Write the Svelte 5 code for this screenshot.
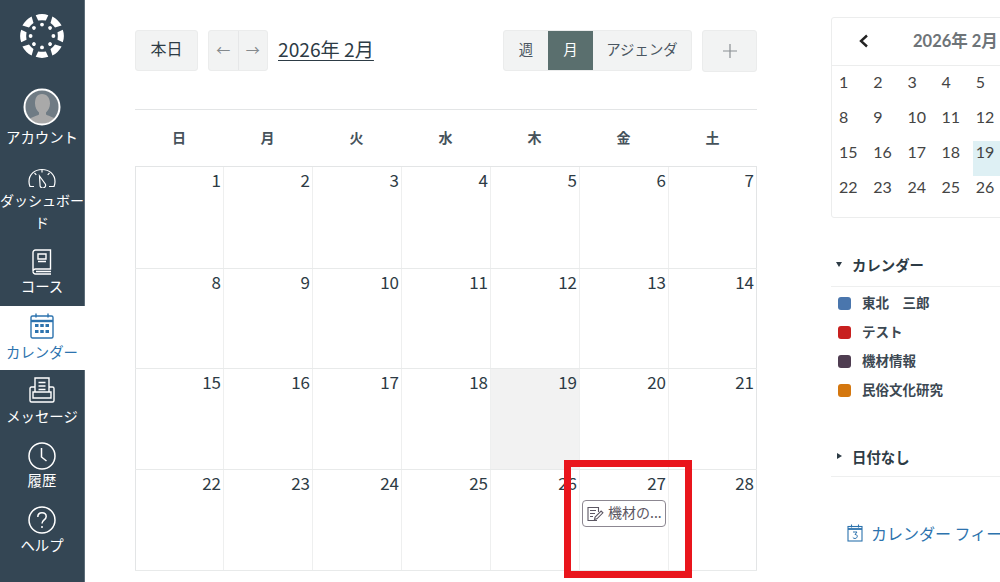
<script>
  const weekdays = ['日', '月', '火', '水', '木', '金', '土'];
  const weeks = [[1,2,3,4,5,6,7],[8,9,10,11,12,13,14],[15,16,17,18,19,20,21],[22,23,24,25,26,27,28]];
  const rowHeights = [102, 100, 101, 101];
  const mini = [[1,2,3,4,5],[8,9,10,11,12],[15,16,17,18,19],[22,23,24,25,26]];
  const cals = [
    { name: '東北　三郎', color: '#4a76ad' },
    { name: 'テスト', color: '#c8201f' },
    { name: '機材情報', color: '#4f3d51' },
    { name: '民俗文化研究', color: '#d4770f' }
  ];
  const wedgeAngles = [0, 45, 90, 135, 180, 225, 270, 315];
</script>

<div class="page">
  <nav class="rail">
    <div class="logo">
      <svg width="46" height="46" viewBox="-23 -23 46 46" fill="#fff">
        {#each wedgeAngles as a}
          {#if a % 90 === 0}
            <path transform="rotate({a})" d="M-6.300 -20.800 Q0 -23 6.300 -20.800 L3.800 -15.500 Q0 -16.200 -3.800 -15.500 Z" />
            <circle transform="rotate({a})" cx="0" cy="-11.400" r="1.900" />
          {:else}
            <path transform="rotate({a})" d="M-6.500 -21.200 Q0 -23.200 6.500 -21.200 L3.200 -15.200 Q0 -15.800 -3.200 -15.200 Z" />
            <circle transform="rotate({a})" cx="0" cy="-11.400" r="1.900" />
          {/if}
        {/each}
      </svg>
    </div>

    <a class="item account">
      <svg class="avatar" width="38" height="38" viewBox="0 0 38 38">
        <defs><clipPath id="c"><circle cx="19" cy="19" r="17" /></clipPath></defs>
        <g clip-path="url(#c)">
          <circle cx="19" cy="19" r="17" fill="#6f7b84" />
          <path d="M19 6c5 0 8 4 8 9.500 0 4-1.800 7-4 9v2c3 2 10 2.500 12 8v6H4v-6c2-5.500 9-6 12-8v-2c-2.200-2-4-5-4-9C12 10 14 6 19 6z" fill="#a9a9a9" />
        </g>
        <circle cx="19" cy="19" r="17.500" fill="none" stroke="#fff" stroke-width="2" />
      </svg>
      <span>アカウント</span>
    </a>

    <a class="item dash">
      <svg width="28" height="20" viewBox="0 0 28 20" fill="none" stroke="#fff" stroke-width="1.200">
        <path d="M6 18.500H2C1.300 16.800 1 15 1 13.500 1 6.500 6.500 1.500 14 1.500S27 6.500 27 13.500c0 1.500-.3 3.300-1 5H21" />
        <path d="M11.500 8l5.800 8a2.800 2.800 0 1 1-5.200 2z" />
        <path d="M14 2v2.500M6.500 5l1.800 1.800M21.500 5l-1.800 1.800" />
      </svg>
      <span>ダッシュボード</span>
    </a>

    <a class="item">
      <svg width="20" height="26" viewBox="0 0 20 26" fill="none" stroke="#fff" stroke-width="1.400">
        <path d="M3.500 1h15v19h-15A2.500 2.500 0 0 0 1 22.500V3.500A2.500 2.500 0 0 1 3.500 1z" />
        <path d="M6 5h8v5H6zM6 12.500h8" />
        <path d="M1 22.500A2.500 2.500 0 0 0 3.500 25H19M4 22.500h15" />
      </svg>
      <span>コース</span>
    </a>

    <a class="item active">
      <svg width="24" height="26" viewBox="0 0 24 26" fill="none" stroke="#2d73ae" stroke-width="1.400">
        <rect x="1" y="3" width="22" height="22" rx="1.500" />
        <path d="M1 8h22" stroke-width="2.400" />
        <path d="M6 .5v4M18 .5v4" />
        <g fill="#2d73ae" stroke="none">
          <rect x="5" y="11" width="3.500" height="3" /><rect x="10.250" y="11" width="3.500" height="3" /><rect x="15.500" y="11" width="3.500" height="3" />
          <rect x="5" y="17" width="3.500" height="3" /><rect x="10.250" y="17" width="3.500" height="3" /><rect x="15.500" y="17" width="3.500" height="3" />
        </g>
      </svg>
      <span>カレンダー</span>
    </a>

    <a class="item msg">
      <svg width="26" height="26" viewBox="0 0 26 26" fill="none" stroke="#fff" stroke-width="1.400">
        <path d="M6 15V1h14v14" />
        <path d="M9.500 5.500h7M9.500 9h7M9.500 12.500h7" stroke-width="1.600" />
        <path d="M6 10H2.500C1.500 10 1 10.700 1 11.500V23.500C1 24.500 1.500 25 2.500 25h21c1 0 1.500-.5 1.500-1.500V11.500c0-.8-.5-1.500-1.500-1.500H20" />
        <path d="M4 15h18v6H4z" />
      </svg>
      <span>メッセージ</span>
    </a>

    <a class="item round">
      <svg width="28" height="28" viewBox="0 0 28 28" fill="none" stroke="#fff" stroke-width="1.500">
        <circle cx="14" cy="14" r="13" />
        <path d="M13.500 6v9l5 4" />
      </svg>
      <span>履歴</span>
    </a>

    <a class="item round help">
      <svg width="28" height="28" viewBox="0 0 28 28" fill="none" stroke="#fff" stroke-width="1.500">
        <circle cx="14" cy="14" r="13" />
        <path d="M9.800 11c0-2.600 1.800-4.300 4.200-4.300s4.200 1.600 4.200 3.800c0 3.400-4.200 3.500-4.200 7" />
        <circle cx="14" cy="21" r="1" fill="#fff" stroke="none" />
      </svg>
      <span>ヘルプ</span>
    </a>
  </nav>

  <main class="main">
    <header class="toolbar">
      <button class="btn today">本日</button>
      <div class="btn arrows">
        <span class="arrow">←</span>
        <span class="arrow">→</span>
      </div>
      <a class="title">2026年 2月</a>
      <div class="btn views">
        <span class="view week">週</span>
        <span class="view on">月</span>
        <span class="view agenda">アジェンダ</span>
      </div>
      <button class="btn add" aria-label="追加">
        <svg width="14" height="14" viewBox="0 0 14 14"><path d="M7 0v14M0 7h14" stroke="#8a8f93" stroke-width="1.200" /></svg>
      </button>
    </header>

    <div class="weekdays">
      {#each weekdays as d}<div class="wd">{d}</div>{/each}
    </div>

    <div class="grid">
      {#each weeks as w, r}
        <div class="week-row" style="height:{rowHeights[r]}px">
          {#each w as n}
            <div class="day" class:today-cell={n === 19}>
              <span class="num">{n}</span>
              {#if n === 27}
                <div class="event">
                  <svg width="18" height="18" viewBox="0 0 18 18" fill="none" stroke="#5c5763" stroke-width="1.100">
                    <path d="M11 15.500H2V2.500h10.500V7" />
                    <path d="M4 5.500h6M4 8.500h5M4 11.500h3" />
                    <path d="M8.500 14.500l.6-2.500 6-6 1.800 1.800-6 6z" />
                  </svg>
                  <span>機材の...</span>
                </div>
              {/if}
            </div>
          {/each}
        </div>
      {/each}
    </div>
  </main>

  <aside class="side">
    <section class="mini">
      <div class="mini-head">
        <svg width="12" height="14" viewBox="0 0 12 14" fill="none" stroke="#222" stroke-width="2.400"><path d="M9 1.500L3 7l6 5.500" /></svg>
        <span>2026年 2月</span>
      </div>
      <div class="mini-body">
        {#each mini as row}
          <div class="mini-row">
            {#each row as n}
              <span class="mini-cell" class:mini-today={n === 19}>{n}</span>
            {/each}
          </div>
        {/each}
      </div>
    </section>

    <section class="acc first">
      <h3 class="acc-head"><i class="tri down"></i>カレンダー</h3>
      <ul class="cal-list">
        {#each cals as c}
          <li><i class="swatch" style="background:{c.color}"></i><span>{c.name}</span></li>
        {/each}
      </ul>
    </section>

    <section class="acc second">
      <h3 class="acc-head"><i class="tri right"></i>日付なし</h3>
    </section>

    <a class="feed">
      <svg width="16" height="18" viewBox="0 0 16 18" fill="none" stroke="#2d73ae" stroke-width="1.100">
        <rect x="1" y="2.500" width="14" height="14.500" />
        <path d="M1 5h14" stroke-width="1.800" />
        <path d="M4.500 .5v3M11.500 .5v3" />
        <path d="M6 8h4l-2 2.500c1.500 0 2.300.8 2.300 1.800S9.300 14.500 8 14.500c-1 0-1.800-.4-2.200-1.100" stroke-width="1" />
      </svg>
      <span>カレンダー フィード</span>
    </a>
  </aside>

  <div class="highlight"></div>
</div>

<style>
  :global(body) { margin: 0; }
  .page {
    position: relative;
    display: flex;
    width: 1000px;
    height: 582px;
    overflow: hidden;
    background: #fff;
    color: #2d3b45;
    font-family: "Noto Sans CJK JP", Lato, sans-serif;
  }

  .rail {
    flex: 0 0 85px;
    width: 85px;
    min-width: 0;
    height: 582px;
    background: #344654;
    box-shadow: inset -1px 0 #5d6d79;
    color: #fff;
    display: flex;
    flex-direction: column;
  }
  .logo { height: 85px; display: flex; justify-content: center; align-items: flex-start; padding: 13px 1px 0 0; box-sizing: border-box; }
  .item {
    height: 64px;
    width: 85px;
    display: flex;
    flex-direction: column;
    align-items: center;
    justify-content: flex-start;
    padding: 7px 1px 0 0;
    box-sizing: border-box;
    text-align: center;
    font-size: 14.400px;
    line-height: 22px;
  }
  .item svg { display: block; flex: none; }
  .item span { display: block; width: 84px; margin-top: 0; }
  .account { height: 73px; padding-top: 3px; }
  .account span { margin-top: -3px; line-height: 28px; }
  .dash { height: 84px; padding-top: 10px; font-size: 14px; }
  .dash span { margin-top: 1px; }
  .active { background: #fff; color: #2d73ae; }
  .active span, .msg span { margin-top: 2px; }
  .round { padding-top: 8px; }
  .round span { margin-top: -1px; }
  .help span { margin-top: 0; }

  .main { margin-left: 50px; width: 622px; flex: 0 0 622px; }
  .toolbar { display: flex; align-items: flex-start; height: 110px; box-sizing: border-box; padding-top: 30px; border-bottom: 1px solid #e3e5e6; }
  .btn {
    box-sizing: border-box;
    background: #f2f3f3;
    border: 1px solid #ebecec;
    border-radius: 3px;
    color: #2d3b45;
    font: inherit;
    font-size: 14.400px;
    padding: 0;
  }
  .today { width: 63px; height: 41px; font-size: 16px; padding-bottom: 5px; }
  .arrows { width: 60px; height: 41px; margin-left: 10px; display: flex; }
  .arrow { flex: 1; display: flex; align-items: center; justify-content: center; color: #84898c; font-size: 14px; padding-bottom: 3px; }
  .arrow + .arrow { border-left: 1px solid #e6e7e8; }
  .title { margin-left: 10px; margin-top: 5px; font-size: 19.200px; line-height: 28px; text-decoration: underline; text-underline-offset: 3px; }
  .views { margin-left: auto; width: 189px; height: 41px; display: flex; overflow: hidden; align-items: stretch; }
  .view { display: flex; align-items: center; justify-content: center; color: #4a5661; padding-bottom: 5px; box-sizing: border-box; }
  .week { width: 44px; }
  .on { width: 45px; background: #5a6f6e; color: #fff; }
  .agenda { flex: 1; }
  .add { margin-left: 10px; width: 55px; height: 42px; display: flex; align-items: center; justify-content: center; }

  .weekdays { display: grid; grid-template-columns: 88px repeat(6, 89px); height: 56px; box-sizing: border-box; padding-bottom: 3px; align-items: center; text-align: center; font-size: 14px; font-weight: 700; color: #46525b; }

  .grid { border-top: 1px solid #e3e5e6; }
  .week-row { display: grid; grid-template-columns: 88px repeat(6, 89px); box-sizing: border-box; border-bottom: 1px solid #e8eaea; }
  .day { border-left: 1px solid #eeefef; text-align: right; padding: 1px 2px 0 0; box-sizing: border-box; position: relative; font-size: 17px; line-height: 24px; min-width: 0; }
  .day:first-child { border-left-color: #e3e5e6; }
  .day:last-child { border-right: 1px solid #e3e5e6; }
  .today-cell { background: #f2f2f2; }
  .num { display: block; }
  .event {
    box-sizing: border-box;
    width: 84px;
    height: 27px;
    margin: 5px 0 0 2px;
    border: 1px solid #8c8791;
    border-radius: 4px;
    background: #fff;
    display: flex;
    align-items: center;
    gap: 4px;
    padding-left: 3px;
    color: #5c5763;
    font-size: 14px;
    line-height: 18px;
    text-align: left;
  }
  .event span { margin-top: -3px; }

  .side { margin-left: 74px; flex: 0 0 240px; width: 240px; }
  .mini { margin-top: 17px; box-sizing: border-box; height: 201px; border: 1px solid #eceded; border-radius: 3px; font-family: Lato, "Noto Sans CJK JP", sans-serif; }
  .mini-head { height: 48px; box-sizing: border-box; border-bottom: 1px solid #eceded; display: flex; align-items: center; padding: 0 0 1px 26px; font-size: 16.500px; font-weight: 700; color: #6e7478; }
  .mini-head span { margin: -3px 0 0 43px; }
  .mini-body { padding: 5px 0 0 4px; }
  .mini-row { display: flex; height: 35px; }
  .mini-cell { width: 34.200px; flex: none; box-sizing: border-box; padding-left: 3px; font-size: 16px; line-height: 22px; color: #444; }
  .mini-today { background: #def0f4; }

  .acc-head { margin: 0; box-sizing: border-box; border-bottom: 1px solid #eeefef; display: flex; align-items: center; font-size: 14.400px; font-weight: 700; color: #2d3b45; padding: 0 0 3px 4px; }
  .first { margin-top: 28px; }
  .first .acc-head { height: 41px; }
  .second { margin-top: 31px; }
  .second .acc-head { height: 41px; padding-bottom: 0; }
  .tri { display: block; width: 0; height: 0; }
  .down { border-left: 3.500px solid transparent; border-right: 3.500px solid transparent; border-top: 5px solid #2d3b45; margin-right: 10px; margin-left: 1px; }
  .right { border-top: 3.500px solid transparent; border-bottom: 3.500px solid transparent; border-left: 5px solid #2d3b45; margin-left: 2px; margin-right: 10px; }
  .cal-list { list-style: none; margin: 2px 0 0; padding: 0 0 0 7px; }
  .cal-list li { height: 29px; display: flex; align-items: center; font-size: 13.500px; font-weight: 700; color: #3c4852; }
  .cal-list span { margin-top: -3px; }
  .swatch { display: block; width: 13px; height: 13px; border-radius: 3px; margin-right: 11px; flex: none; }
  .feed { display: flex; align-items: center; margin: 46px 0 0 16px; color: #2d73ae; font-size: 16px; line-height: 20px; white-space: nowrap; }
  .feed span { margin-left: 8px; }

  .highlight { position: absolute; left: 564px; top: 460px; width: 128px; height: 118px; box-sizing: border-box; border: 7px solid #e9151c; pointer-events: none; }
</style>
